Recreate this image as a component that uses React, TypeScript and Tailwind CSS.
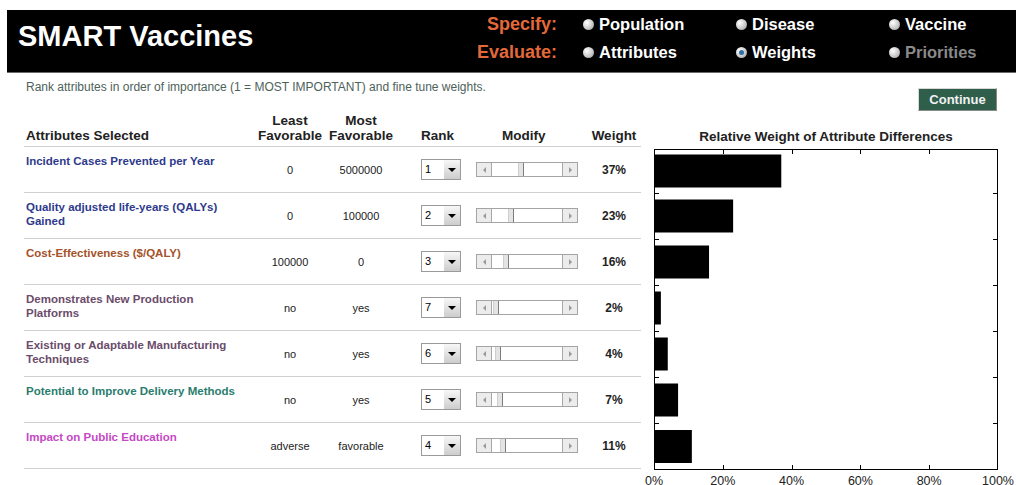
import React from 'react';

type Attr = {
  lines: string[];
  color: string;
  least: string;
  most: string;
  rank: number;
  weight: number;
};

const attributes: Attr[] = [
  { lines: ['Incident Cases Prevented per Year'], color: 'text-[#2e3a8c]', least: '0', most: '5000000', rank: 1, weight: 37 },
  { lines: ['Quality adjusted life-years (QALYs)', 'Gained'], color: 'text-[#2e3a8c]', least: '0', most: '100000', rank: 2, weight: 23 },
  { lines: ['Cost-Effectiveness ($/QALY)'], color: 'text-[#a4532a]', least: '100000', most: '0', rank: 3, weight: 16 },
  { lines: ['Demonstrates New Production', 'Platforms'], color: 'text-[#6b4c6b]', least: 'no', most: 'yes', rank: 7, weight: 2 },
  { lines: ['Existing or Adaptable Manufacturing', 'Techniques'], color: 'text-[#6b4c6b]', least: 'no', most: 'yes', rank: 6, weight: 4 },
  { lines: ['Potential to Improve Delivery Methods'], color: 'text-[#2a7d6e]', least: 'no', most: 'yes', rank: 5, weight: 7 },
  { lines: ['Impact on Public Education'], color: 'text-[#c548c5]', least: 'adverse', most: 'favorable', rank: 4, weight: 11 },
];

const Radio = ({ label, checked, dim }: { label: string; checked?: boolean; dim?: boolean }) => (
  <div className="ml-[26px] flex items-center gap-[5px]">
    <span className="flex h-[11px] w-[11px] items-center justify-center rounded-full bg-[radial-gradient(circle_at_35%_35%,#ffffff,#c4c4c4_60%,#8c8c8c)]">
      {checked && <span className="h-[5px] w-[5px] rounded-full bg-[#2c6ea6]" />}
    </span>
    <span className={dim ? 'text-[#8a8a8a]' : 'text-white'}>{label}</span>
  </div>
);

const RankSelect = ({ value }: { value: number }) => (
  <div className="flex h-[21px] w-[40px] border border-[#9a9a9a] bg-white">
    <span className="flex-1 pl-[3px] text-[11px] leading-[19px] text-black">{value}</span>
    <span className="flex w-[16px] items-center justify-center bg-gradient-to-b from-[#f7f7f7] to-[#cdcdcd]">
      <span className="h-0 w-0 border-x-[4px] border-t-[4px] border-x-transparent border-t-black" />
    </span>
  </div>
);

const WeightSlider = ({ value }: { value: number }) => (
  <div className="flex h-[15px] w-[102px] border border-[#a4a4a4] bg-white">
    <div className="flex w-[15px] items-center justify-center border-r border-[#a8a8a8] bg-[#ececec]">
      <span className="h-0 w-0 border-y-[3px] border-r-[3px] border-y-transparent border-r-[#9a9a9a]" />
    </div>
    <div className="relative flex-1">
      {/* thumb sits over the track at the weight */}
      <div
        className="absolute top-0 bottom-0 w-[6px] border-r border-l border-r-[#7c7c7c] border-l-[#cfcfcf] bg-[#e4e4e4]"
        style={{ left: `${value * 0.7}px` }}
      />
    </div>
    <div className="flex w-[15px] items-center justify-center border-l border-[#a8a8a8] bg-[#ececec]">
      <span className="h-0 w-0 border-y-[3px] border-l-[3px] border-y-transparent border-l-[#9a9a9a]" />
    </div>
  </div>
);

// band edges in chart coordinates, lined up with the table rows
const bands = [2, 46, 92, 138, 184, 230, 276, 323];
const X0 = 13;
const X1 = 357;

const WeightChart = () => {
  const span = X1 - X0;
  return (
    <svg width={375} height={339} className="block">
      {attributes.map((a, i) => {
        const mid = (bands[i] + bands[i + 1]) / 2;
        return <rect key={i} x={X0} y={mid - 16.5} width={(a.weight / 100) * span} height={33} fill="#000" />;
      })}
      <rect x={X0 + 0.5} y={2.5} width={span - 1} height={320} fill="none" stroke="#000" strokeWidth={1} />
      {[1, 2, 3, 4].map((k) => {
        const x = Math.round(X0 + (k * span) / 5) + 0.5;
        return (
          <g key={k}>
            <line x1={x} y1={3} x2={x} y2={7} stroke="#000" />
            <line x1={x} y1={322} x2={x} y2={318} stroke="#000" />
          </g>
        );
      })}
      {bands.slice(1, -1).map((y) => (
        <g key={y}>
          <line x1={X0} y1={y + 0.5} x2={X0 + 5} y2={y + 0.5} stroke="#000" />
          <line x1={X1} y1={y + 0.5} x2={X1 - 5} y2={y + 0.5} stroke="#000" />
        </g>
      ))}
      {[0, 20, 40, 60, 80, 100].map((p) => (
        <text
          key={p}
          x={X0 + (p / 100) * span}
          y={338}
          textAnchor="middle"
          fontSize={12.5}
          fill="#222"
          fontFamily="'Liberation Sans', Arial, sans-serif"
        >
          {p}%
        </text>
      ))}
    </svg>
  );
};

export default function App() {
  return (
    <div className="min-h-[485px] bg-white pt-[10px] pl-[7px] font-['Liberation_Sans',Arial,sans-serif] text-[#222]">
      <header className="flex h-[63px] border-b border-[#6a6a6a] bg-black">
        <div className="w-[453px] pt-[10px] pl-[11px] text-[29px] leading-[33px] font-bold text-white">SMART Vaccines</div>
        <div className="grid grid-cols-[97px_153px_153px_140px] grid-rows-[28px_28px] items-center text-[16.5px] leading-[28px] font-bold">
          <span className="text-right text-[18px] text-[#e4693a]">Specify:</span>
          <Radio label="Population" />
          <Radio label="Disease" />
          <Radio label="Vaccine" />
          <span className="text-right text-[18px] text-[#e4693a]">Evaluate:</span>
          <Radio label="Attributes" />
          <Radio label="Weights" checked />
          <Radio label="Priorities" dim />
        </div>
      </header>

      <div className="flex items-start justify-between pt-[7px] pr-[19px] pl-[19px]">
        <p className="text-[12px] leading-[14px] text-[#4d6259]">
          Rank attributes in order of importance (1 = MOST IMPORTANT) and fine tune weights.
        </p>
        <button className="mt-[8px] h-[23px] w-[79px] border border-t-[#d8d8d8] border-l-[#d8d8d8] border-r-[#8a8a8a] border-b-[#8a8a8a] bg-[#2f5e4b] text-[13px] leading-[20px] font-bold text-[#f2f2f2]">
          Continue
        </button>
      </div>

      <div className="flex pl-[17px]">
        <div className="w-[617px]">
          <div className="flex h-[36px] items-end border-b border-[#d0d0d0] pb-[3px] text-[13.5px] leading-[15px] font-bold">
            <div className="w-[231px] pl-[2px]">Attributes Selected</div>
            <div className="w-[70px] text-center">
              Least
              <br />
              Favorable
            </div>
            <div className="w-[72px] text-center">
              Most
              <br />
              Favorable
            </div>
            <div className="w-[66px] pl-[24px]">Rank</div>
            <div className="w-[128px] pl-[39px]">Modify</div>
            <div className="w-[46px] text-center">Weight</div>
          </div>
          {attributes.map((a) => (
            <div key={a.lines[0]} className="flex h-[46px] border-b border-[#d0d0d0]">
              <div className={`w-[231px] pt-[8px] pl-[2px] text-[11.5px] leading-[13.5px] font-bold ${a.color}`}>
                {a.lines.map((l) => (
                  <div key={l}>{l}</div>
                ))}
              </div>
              <div className="flex w-[70px] items-center justify-center pt-[2px] text-[11px]">{a.least}</div>
              <div className="flex w-[72px] items-center justify-center pt-[2px] text-[11px]">{a.most}</div>
              <div className="flex w-[66px] items-center pl-[24px]">
                <RankSelect value={a.rank} />
              </div>
              <div className="flex w-[128px] items-center pl-[13px]">
                <WeightSlider value={a.weight} />
              </div>
              <div className="flex w-[46px] items-center justify-center text-[12px] font-bold">{a.weight}%</div>
            </div>
          ))}
        </div>

        <div className="w-[375px]">
          <div className="flex h-[36px] items-end justify-center pr-[5px] pb-[3px] text-[13.5px] leading-[15px] font-bold">
            Relative Weight of Attribute Differences
          </div>
          <WeightChart />
        </div>
      </div>
    </div>
  );
}
